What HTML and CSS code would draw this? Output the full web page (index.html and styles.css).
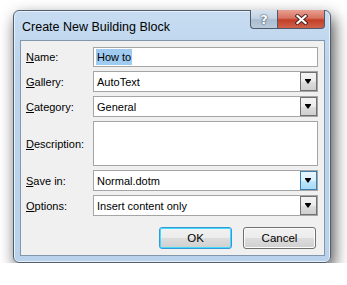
FILE: index.html
```html
<!DOCTYPE html>
<html lang="en">
<head>
  <meta charset="UTF-8" />
  <title>Create New Building Block</title>
  <link rel="stylesheet" href="styles.css">
</head>
<body>

  <div class="window">
    <div class="titlebar">
      <span class="title">Create New Building Block</span>
      <div class="caption-buttons">
        <div class="cap-btn help">?</div>
        <div class="cap-btn close">
          <svg width="13" height="11" viewBox="0 0 13 11">
            <path d="M2.5 2 L10.5 9 M10.5 2 L2.5 9" stroke="#4a2020" stroke-width="4" stroke-linecap="square" />
            <path d="M2.5 2 L10.5 9 M10.5 2 L2.5 9" stroke="#fff" stroke-width="2.2" stroke-linecap="square" />
          </svg>
        </div>
      </div>
    </div>

    <div class="client">
      <div class="fields">
        <div class="row r-name">
          <label><u>N</u>ame:</label>
          <div class="box"><span class="selected">How to</span></div>
        </div>
        <div class="row">
          <label><u>G</u>allery:</label>
          <div class="box combo">AutoText<span class="drop"></span></div>
        </div>
        <div class="row">
          <label><u>C</u>ategory:</label>
          <div class="box combo">General<span class="drop"></span></div>
        </div>
        <div class="row r-desc">
          <label><u>D</u>escription:</label>
          <div class="box"></div>
        </div>
        <div class="row">
          <label><u>S</u>ave in:</label>
          <div class="box combo">Normal.dotm<span class="drop hot"></span></div>
        </div>
        <div class="row">
          <label><u>O</u>ptions:</label>
          <div class="box combo">Insert content only<span class="drop"></span></div>
        </div>
      </div>

      <div class="actions">
        <button class="btn default">OK</button>
        <button class="btn">Cancel</button>
      </div>
    </div>
  </div>

</body>
</html>
```

FILE: styles.css
```css
body {
  margin: 0;
  background: #fff;
  font-family: "Liberation Sans", Arial, sans-serif;
  font-size: 11px;
  color: #000;
}

.window {
  margin: 10px 0 0 13px;
  width: 316px;
  height: 251px;
  border: 1px solid #4f5f70;
  border-radius: 6px;
  background: linear-gradient(to bottom, #c7dcf1 0%, #bdd4ec 20%, #b9d1ea 100%);
  box-shadow: 3px 7px 16px rgba(0, 0, 0, 0.7), inset 0 0 0 1px #e6f0fa;
  display: flex;
  flex-direction: column;
}

.titlebar {
  height: 29px;
  display: flex;
  align-items: flex-start;
  justify-content: space-between;
  padding: 0 5px 0 8px;
}

.title {
  margin-top: 9px;
  font-size: 12.5px;
  color: #000;
}

.caption-buttons {
  display: flex;
  margin-top: -1px;
}

.cap-btn {
  height: 18px;
  border: 1px solid #4c5a6c;
  border-top: none;
  display: flex;
  align-items: center;
  justify-content: center;
}

.help {
  width: 26px;
  border-radius: 0 0 0 4px;
  border-right: none;
  background: linear-gradient(to bottom, #d7e2ee 0%, #c4d3e3 45%, #a9bcd1 55%, #b9cadb 100%);
  color: #fff;
  font-family: "DejaVu Sans", sans-serif;
  font-weight: bold;
  font-size: 13px;
  text-shadow: 0 0 2px #37475a, 0 0 1px #37475a;
}

.close {
  width: 46px;
  border-radius: 0 0 4px 0;
  background: linear-gradient(to bottom, #e8a093 0%, #d7725f 45%, #c23f28 55%, #d0614a 100%);
}

.client {
  flex: 1;
  margin: 0 5px 6px 6px;
  background: #f0f0f0;
  border: 1px solid #8397ac;
  display: flex;
  flex-direction: column;
  padding: 6px 6px 6px 5px;
}

.fields {
  display: flex;
  flex-direction: column;
  gap: 4px;
}

.row {
  display: flex;
  align-items: center;
  height: 21px;
}

.r-name {
  height: 20px;
}

.r-desc {
  height: 45px;
}

.row label {
  width: 67px;
  flex: none;
}

.box {
  flex: 1;
  align-self: stretch;
  background: #fff;
  border: 1px solid #a5a5a5;
  display: flex;
  align-items: center;
  padding-left: 2px;
  position: relative;
}

.selected {
  background: #9fcbf1;
  padding: 2px 1px 2px 1px;
}

.combo {
  padding-left: 3px;
}

.drop {
  position: absolute;
  top: 0;
  right: 0;
  bottom: 0;
  width: 15px;
  border: 1px solid #707070;
  background: linear-gradient(to bottom, #f3f3f3 0%, #ebebeb 50%, #dddddd 51%, #cfcfcf 100%);
}

.drop::after {
  content: "";
  position: absolute;
  left: 4px;
  top: 7px;
  border-top: 4px solid #000;
  border-left: 3.5px solid transparent;
  border-right: 3.5px solid transparent;
  box-shadow: 0 -1px 0 #000;
}

.drop.hot {
  border-color: #3c7fb1;
  background: linear-gradient(to bottom, #eaf6fd 0%, #d9f0fc 50%, #bee6fd 51%, #a7d9f5 100%);
}

.actions {
  margin-top: auto;
  display: flex;
  justify-content: flex-end;
  gap: 11px;
  padding-right: 2px;
}

.btn {
  width: 73px;
  height: 22px;
  font-family: inherit;
  font-size: 11.5px;
  color: #000;
  border: 1px solid #707070;
  border-radius: 3px;
  background: linear-gradient(to bottom, #f2f2f2 0%, #ebebeb 50%, #dddddd 51%, #cfcfcf 100%);
  box-shadow: inset 0 0 0 1px #fcfcfc;
  padding: 0;
}

.btn.default {
  border-color: #3399dd;
  box-shadow: inset 0 0 0 1px #48d8f8;
}
```
